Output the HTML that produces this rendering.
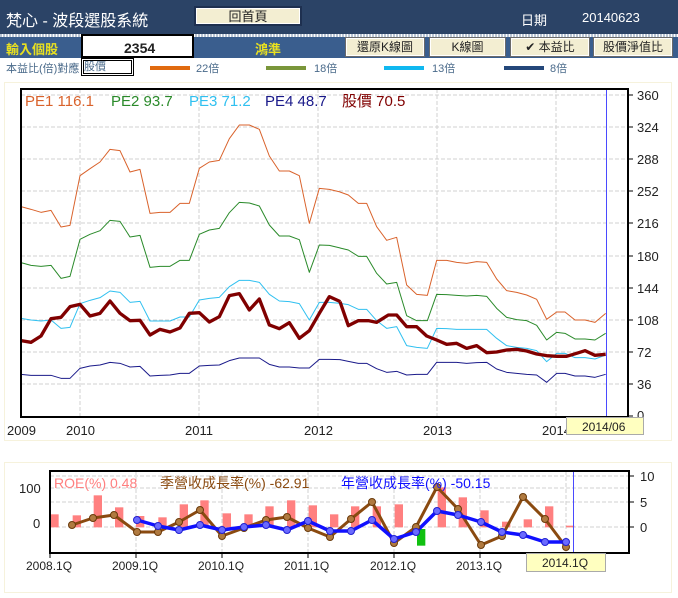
<!DOCTYPE html>
<html><head><meta charset="utf-8"><style>
*{margin:0;padding:0;box-sizing:border-box}
body{width:678px;height:598px;background:#fff;position:relative;overflow:hidden;font-family:"Liberation Sans","Noto Sans CJK TC",sans-serif}
.a{position:absolute;white-space:nowrap}
.btn{position:absolute;background:#f3eed2;border:1px solid #6a6a6a;box-shadow:inset 0 0 0 1px #fff;font-size:12px;color:#222;text-align:center;line-height:18px}
</style></head><body>
<div class="a" style="left:0;top:0;width:678px;height:34px;background:#2b4366"></div>
<div class="a" style="left:0;top:34px;width:678px;height:3px;background:repeating-linear-gradient(90deg,#b8c4d4 0 2px,#fff 2px 3px)"></div>
<div class="a" style="left:6px;top:7px;font-size:16px;color:#fff">梵心 - 波段選股系統</div>
<div class="btn" style="left:194px;top:6px;width:108px;height:20px;border:2px solid #1e3050;font-size:13px">回首頁</div>
<div class="a" style="left:521px;top:10px;font-size:13px;color:#fff">日期</div>
<div class="a" style="left:582px;top:10px;font-size:13px;color:#fff">20140623</div>
<div class="a" style="left:0;top:37px;width:678px;height:21px;background:#3a5e8e"></div>
<div class="a" style="left:6px;top:39px;font-size:13px;font-weight:bold;color:#e8e020">輸入個股</div>
<div class="a" style="left:81px;top:34px;width:113px;height:24px;background:#fff;border:2px solid #000"></div>
<div class="a" style="left:124px;top:40px;font-size:14px;font-weight:bold;color:#222">2354</div>
<div class="a" style="left:255px;top:39px;font-size:13px;font-weight:bold;color:#e8e020">鴻準</div>
<div class="btn" style="left:345px;top:37px;width:80px;height:20px">還原K線圖</div>
<div class="btn" style="left:429px;top:37px;width:77px;height:20px">K線圖</div>
<div class="btn" style="left:510px;top:37px;width:80px;height:20px">✔ 本益比</div>
<div class="btn" style="left:593px;top:37px;width:80px;height:20px">股價淨值比</div>
<div class="a" style="left:6px;top:60px;font-size:11px;color:#4a6a8a">本益比(倍)對應</div>
<div class="a" style="left:81px;top:58px;width:53px;height:18px;border:1px solid #000;box-shadow:inset 0 0 0 1px #fff,inset 0 0 0 2px #000;font-size:11px;color:#4a6a8a;line-height:16px;padding-left:2px">股價</div>
<div class="a" style="left:150px;top:66px;width:40px;height:4px;background:#e06a10"></div>
<div class="a" style="left:196px;top:60px;font-size:11px;color:#4a6a8a">22倍</div>
<div class="a" style="left:266px;top:66px;width:40px;height:4px;background:#7a963a"></div>
<div class="a" style="left:314px;top:60px;font-size:11px;color:#4a6a8a">18倍</div>
<div class="a" style="left:384px;top:66px;width:40px;height:4px;background:#10b8f0"></div>
<div class="a" style="left:432px;top:60px;font-size:11px;color:#4a6a8a">13倍</div>
<div class="a" style="left:504px;top:66px;width:40px;height:4px;background:#24477a"></div>
<div class="a" style="left:550px;top:60px;font-size:11px;color:#4a6a8a">8倍</div>

<svg class="a" style="left:0;top:0" width="678" height="598" font-family="Liberation Sans, Noto Sans CJK TC, sans-serif">
<rect x="4.5" y="82.5" width="667" height="358" fill="none" stroke="#f6f2dc"/>
<rect x="4.5" y="462.5" width="667" height="130" fill="none" stroke="#f6f2dc"/>
<g stroke="#d0d0d0" stroke-dasharray="4,2" fill="none">
<path d="M21 384H628M21 352H628M21 320H628M21 288H628M21 256H628M21 223H628M21 191H628M21 159H628M21 127H628M21 95H628"/>
<path d="M80 89V417M199 89V417M318 89V417M437 89V417M556 89V417"/>
<path d="M50 488H629M50 502H629M50 476H629M50 527H629"/>
<path d="M136 471V553M222 471V553M308 471V553M394 471V553M480 471V553M566 471V553"/>
</g>
<g fill="none" stroke-linejoin="round">
<g transform="translate(0,80) scale(0.33333)" stroke-width="3">
<polyline stroke="#d9622b" points="63,380 93,388 123,397 153,391 183,441 210,436 240,287 270,266 300,246 330,208 360,212 390,276 420,268 450,400 480,397 510,397 540,370 568,370 598,265 628,246 658,241 688,176 718,135 748,135 778,148 808,228 838,273 868,273 898,287 928,430 958,325 988,328 1021,336"/>
<polyline stroke="#2a8a2a" points="63,548 93,556 123,559 153,556 183,595 210,589 240,478 270,463 300,452 330,421 360,424 390,471 420,466 450,562 480,559 510,559 540,541 568,541 598,463 628,450 658,445 688,398 718,367 748,369 778,378 808,435 838,468 868,468 898,479 928,577 958,495 988,496 1021,504"/>
<polyline stroke="#30c0f0" points="63,715 93,720 123,723 153,720 183,745 210,742 240,671 270,661 300,653 330,633 360,637 390,667 420,664 450,723 480,723 510,723 540,711 568,711 598,660 628,655 658,652 688,620 718,601 748,601 778,607 808,643 838,663 868,665 898,671 928,720 958,667 988,667 1021,670"/>
<polyline stroke="#1a1a8a" points="63,883 93,886 123,886 153,886 183,895 210,895 240,865 270,858 300,855 330,847 360,850 390,861 420,859 450,888 480,886 510,885 540,880 568,880 598,858 628,856 658,855 688,842 718,834 748,834 778,834 808,853 838,861 868,861 898,864 928,864 958,838 988,838 1021,839"/>
<polyline stroke="#800000" stroke-width="10" points="63,782 93,787 123,768 153,716 183,712 210,680 240,673 270,708 300,700 330,663 360,700 390,722 420,721 450,765 480,748 510,756 540,744 568,700 598,698 628,726 658,710 688,647 718,641 748,690 778,657 808,735 838,746 868,728 898,775 928,752 958,700 988,650 1021,665"/>
</g>
<g transform="translate(340,80) scale(0.33333)" stroke-width="3">
<polyline stroke="#d9622b" points="0,336 25,345 55,370 80,370 110,440 140,481 170,472 200,615 230,643 262,646 290,541 320,541 350,547 380,550 410,545 440,547 470,597 500,632 530,637 560,645 590,658 620,718 650,696 675,696 705,720 735,720 765,727 797,700"/>
<polyline stroke="#2a8a2a" points="0,504 25,510 55,529 80,529 110,580 140,612 170,607 200,707 230,722 262,722 290,643 320,644 350,646 380,648 410,646 440,649 470,685 500,712 530,719 560,722 590,736 620,780 650,757 675,760 705,777 735,777 765,780 797,760"/>
<polyline stroke="#30c0f0" points="0,670 25,674 55,688 80,688 110,722 140,745 170,740 200,797 230,802 262,805 290,745 320,746 350,748 380,748 410,748 440,748 470,775 500,797 530,802 560,805 590,812 620,845 650,820 675,820 705,833 735,833 765,837 797,825"/>
<polyline stroke="#1a1a8a" points="0,839 25,844 55,850 80,850 110,866 140,877 170,874 200,885 230,883 262,883 290,847 320,847 350,847 380,850 410,848 440,847 470,867 500,877 530,880 560,883 590,885 620,907 650,880 675,880 705,888 735,888 765,892 797,883"/>
<polyline stroke="#800000" stroke-width="10" points="0,665 25,737 55,722 85,722 110,727 145,705 170,705 200,740 230,740 260,768 290,780 320,793 350,790 380,805 410,797 440,818 470,816 500,810 530,808 560,813 590,822 620,827 650,829 680,829 710,820 735,812 765,826 797,823"/>
</g>
</g>
<line x1="606.5" y1="89" x2="606.5" y2="417" stroke="#4a4aff"/>
<rect x="21" y="89" width="607" height="328" fill="none" stroke="#000" stroke-width="2"/>
<g stroke="#000"><path d="M628 95h5M628 127h5M628 159h5M628 191h5M628 223h5M628 256h5M628 288h5M628 320h5M628 352h5M628 384h5M628 416h5"/></g>
<g font-size="13" fill="#222">
<text x="637" y="100">360</text><text x="637" y="132">324</text><text x="637" y="164">288</text><text x="637" y="196">252</text><text x="637" y="228">216</text><text x="637" y="261">180</text><text x="637" y="293">144</text><text x="637" y="325">108</text><text x="637" y="357">72</text><text x="637" y="389">36</text><text x="637" y="420">0</text>
<text x="7" y="435">2009</text><text x="66" y="435">2010</text><text x="185" y="435">2011</text><text x="304" y="435">2012</text><text x="423" y="435">2013</text><text x="542" y="435">2014</text>
</g>
<rect x="566.5" y="417.5" width="77" height="17" fill="#ffffc0" stroke="#aaa"/>
<text x="582" y="431" font-size="12" fill="#222">2014/06</text>
<g font-size="15">
<text x="25" y="106" fill="#d9622b">PE1 116.1</text>
<text x="111" y="106" fill="#2a8a2a">PE2 93.7</text>
<text x="189" y="106" fill="#30c0f0">PE3 71.2</text>
<text x="265" y="106" fill="#1a1a8a">PE4 48.7</text>
<text x="342" y="106" fill="#800000">股價 70.5</text>
</g>

<g transform="translate(0,455) scale(0.33333)" fill="#ff8080">
<rect x="151" y="178" width="25" height="39"/><rect x="218" y="181" width="25" height="36"/><rect x="281" y="121" width="25" height="96"/><rect x="345" y="157" width="25" height="60"/><rect x="408" y="183" width="25" height="34"/><rect x="475" y="187" width="25" height="30"/><rect x="539" y="148" width="25" height="69"/><rect x="601" y="136" width="25" height="81"/><rect x="668" y="175" width="25" height="42"/><rect x="733" y="178" width="25" height="39"/><rect x="796" y="154" width="25" height="63"/><rect x="861" y="136" width="25" height="81"/><rect x="926" y="151" width="25" height="66"/><rect x="990" y="178" width="25" height="39"/>
</g>
<g transform="translate(340,455) scale(0.33333)" fill="#ff8080">
<rect x="33" y="154" width="25" height="63"/><rect x="98" y="154" width="25" height="63"/><rect x="164" y="148" width="25" height="69"/><rect x="231" y="222" width="25" height="50" fill="#10c010"/><rect x="293" y="97" width="25" height="120"/><rect x="356" y="127" width="25" height="90"/><rect x="421" y="166" width="25" height="51"/><rect x="486" y="200" width="25" height="17"/><rect x="551" y="193" width="25" height="24"/><rect x="615" y="154" width="25" height="63"/><rect x="678" y="212" width="25" height="5"/>
</g>
<g fill="none" stroke-linejoin="round" stroke-width="3">
<polyline stroke="#8a4a10" points="72,525 93,518 114,515 137,532 158,532 179,522 200,510 222,536 244,528 266,520 287,517 308,528 330,537 351,519 372,502 394,543 416,527 437,487 458,509 481,545 502,536 523,497 545,519 566,547"/>
<polyline stroke="#1010ff" stroke-width="3.5" points="137,520 158,526 179,530 200,525 222,530 244,527 266,525 287,530 308,521 330,531 351,531 372,520 394,539 416,532 437,511 458,515 481,522 502,532 523,535 545,542 566,542"/>
</g>
<g fill="#b07a40" stroke="#6a3a0a">
<circle cx="72" cy="525" r="3.5"/><circle cx="93" cy="518" r="3.5"/><circle cx="114" cy="515" r="3.5"/><circle cx="137" cy="532" r="3.5"/><circle cx="158" cy="532" r="3.5"/><circle cx="179" cy="522" r="3.5"/><circle cx="200" cy="510" r="3.5"/><circle cx="222" cy="536" r="3.5"/><circle cx="244" cy="528" r="3.5"/><circle cx="266" cy="520" r="3.5"/><circle cx="287" cy="517" r="3.5"/><circle cx="308" cy="528" r="3.5"/><circle cx="330" cy="537" r="3.5"/><circle cx="351" cy="519" r="3.5"/><circle cx="372" cy="502" r="3.5"/><circle cx="394" cy="543" r="3.5"/><circle cx="416" cy="527" r="3.5"/><circle cx="437" cy="487" r="3.5"/><circle cx="458" cy="509" r="3.5"/><circle cx="481" cy="545" r="3.5"/><circle cx="502" cy="536" r="3.5"/><circle cx="523" cy="497" r="3.5"/><circle cx="545" cy="519" r="3.5"/><circle cx="566" cy="547" r="3.5"/>
</g>
<g fill="#6a6aff" stroke="#2020d0">
<circle cx="137" cy="520" r="3.5"/><circle cx="158" cy="526" r="3.5"/><circle cx="179" cy="530" r="3.5"/><circle cx="200" cy="525" r="3.5"/><circle cx="222" cy="530" r="3.5"/><circle cx="244" cy="527" r="3.5"/><circle cx="266" cy="525" r="3.5"/><circle cx="287" cy="530" r="3.5"/><circle cx="308" cy="521" r="3.5"/><circle cx="330" cy="531" r="3.5"/><circle cx="351" cy="531" r="3.5"/><circle cx="372" cy="520" r="3.5"/><circle cx="394" cy="539" r="3.5"/><circle cx="416" cy="532" r="3.5"/><circle cx="437" cy="511" r="3.5"/><circle cx="458" cy="515" r="3.5"/><circle cx="481" cy="522" r="3.5"/><circle cx="502" cy="532" r="3.5"/><circle cx="523" cy="535" r="3.5"/><circle cx="545" cy="542" r="3.5"/><circle cx="566" cy="542" r="3.5"/>
</g>
<line x1="573.5" y1="471" x2="573.5" y2="553" stroke="#4a4aff"/>
<rect x="50" y="471" width="579" height="82" fill="none" stroke="#000" stroke-width="2"/>
<g stroke="#000"><path d="M629 476h5M629 502h5M629 527h5M50 553v5M136 553v5M222 553v5M308 553v5M394 553v5M480 553v5"/></g>
<g font-size="13" fill="#222">
<text x="19" y="493">100</text><text x="33" y="528">0</text>
<text x="640" y="481">10</text><text x="640" y="507">5</text><text x="640" y="532">0</text>
</g>
<g font-size="12" fill="#222">
<text x="26" y="570">2008.1Q</text><text x="112" y="570">2009.1Q</text><text x="198" y="570">2010.1Q</text><text x="284" y="570">2011.1Q</text><text x="370" y="570">2012.1Q</text><text x="456" y="570">2013.1Q</text>
</g>
<rect x="526.5" y="553.5" width="79" height="18" fill="#ffffc0" stroke="#aaa"/>
<text x="542" y="567" font-size="12" fill="#222">2014.1Q</text>
<g font-size="14">
<text x="54" y="488" fill="#ff8080">ROE(%) 0.48</text>
<text x="160" y="488" fill="#8a4a10">季營收成長率(%) -62.91</text>
<text x="341" y="488" fill="#1010ff">年營收成長率(%) -50.15</text>
</g>
</svg>
</body></html>
